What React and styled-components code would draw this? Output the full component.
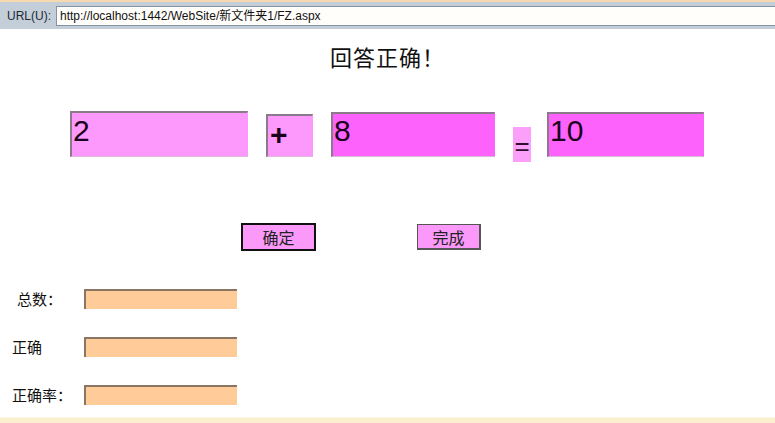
import React from "react";
import styled, { createGlobalStyle } from "styled-components";

const Global = createGlobalStyle`
  html, body { margin: 0; padding: 0; background: #fff; }
  body { font-family: "Noto Sans CJK SC", "Liberation Sans", sans-serif; }
  #root { height: 423px; overflow: hidden; }
`;

const Page = styled.div`
  height: 423px;
  display: flex;
  flex-direction: column;
  background: #fff;
`;

const UrlBar = styled.div`
  height: 27px;
  border-top: 2px solid #f6d9ae;
  background: #c3ced8;
  display: flex;
  align-items: center;
  padding-left: 7px;
  gap: 6px;
`;

const UrlLabel = styled.span`
  font-family: "Liberation Sans", Arial, sans-serif;
  font-size: 12px;
  color: #1e2a36;
  width: 43px;
`;

const UrlField = styled.div`
  flex: 1;
  height: 18px;
  margin-top: 1px;
  background: #fffefb;
  border-top: 1px solid #8594a2;
  border-bottom: 1px solid #8594a2;
  border-left: 1px solid #8594a2;
  font-family: "Liberation Sans", "Noto Sans CJK SC", sans-serif;
  font-size: 12px;
  line-height: 18px;
  padding-left: 3px;
  color: #111;
`;

const Title = styled.div`
  text-align: center;
  font-family: "Noto Sans CJK SC", sans-serif;
  font-size: 22px;
  letter-spacing: 1px;
  line-height: 30px;
  height: 30px;
  color: #111;
  margin-top: 12px;
`;

const Equation = styled.div`
  display: flex;
  align-items: flex-end;
  gap: 18px;
  padding-left: 70px;
  margin-top: 40px;
  height: 46px;
`;

const Box = styled.div`
  box-sizing: border-box;
  width: ${(p) => p.$w}px;
  height: ${(p) => p.$h}px;
  background: ${(p) => p.$bg};
  border-top: 2px solid #8a7a8a;
  border-left: 2px solid #8a7a8a;
  border-right: 1px solid ${(p) => p.$bg};
  border-bottom: 1px solid #d9b8d9;
  font-family: "Liberation Sans", Arial, sans-serif;
  font-size: ${(p) => p.$fs || 30}px;
  font-weight: ${(p) => (p.$bold ? 700 : 400)};
  color: #1a001a;
  display: flex;
  align-items: center;
  padding-left: ${(p) => p.$pl ?? 1}px;
  padding-bottom: ${(p) => p.$pb ?? 8}px;
`;

const Equals = styled.div`
  box-sizing: border-box;
  width: 18px;
  height: 35px;
  margin-bottom: -5px;
  margin-right: -2px;
  background: #fb9ffb;
  font-family: "Liberation Sans", Arial, sans-serif;
  font-size: 26px;
  line-height: 30px;
  text-align: center;
  color: #2a102a;
  padding-top: 4px;
`;

const Buttons = styled.div`
  display: flex;
  align-items: flex-start;
  padding-left: 241px;
  margin-top: 66px;
  gap: 101px;
`;

const Button = styled.div`
  box-sizing: border-box;
  width: ${(p) => p.$w}px;
  height: ${(p) => p.$h}px;
  margin-top: ${(p) => p.$mt || 0}px;
  background: #fa99fa;
  border: ${(p) => (p.$primary ? "2px solid #111" : "1px solid #555")};
  border-right-width: 2px;
  border-bottom-width: 2px;
  font-family: "Noto Sans CJK SC", sans-serif;
  font-size: 16px;
  color: #222;
  display: flex;
  align-items: center;
  justify-content: center;
`;

const Stats = styled.div`
  display: grid;
  grid-template-columns: 72px 153px;
  align-items: center;
  row-gap: 28px;
  padding-left: 12px;
  margin-top: 38px;
`;

const Label = styled.div`
  font-family: "Noto Sans CJK SC", sans-serif;
  font-size: 15px;
  line-height: 20px;
  color: #111;
  padding-left: ${(p) => p.$pl || 0}px;
`;

const Field = styled.div`
  box-sizing: border-box;
  height: 20px;
  background: #ffcb98;
  border-top: 2px solid #8a7565;
  border-left: 2px solid #8a7565;
`;

const Footer = styled.div`
  margin-top: auto;
  height: 5px;
  background: #fcefcf;
  border-top: 1px solid #fdf7e6;
`;

export default function App() {
  return (
    <>
      <Global />
      <Page>
        <UrlBar>
          <UrlLabel>URL(U):</UrlLabel>
          <UrlField>http://localhost:1442/WebSite/新文件夹1/FZ.aspx</UrlField>
        </UrlBar>
        <Title>回答正确！</Title>
        <Equation>
          <Box $w={178} $h={46} $bg="#fd98fd">2</Box>
          <Box $w={47} $h={43} $bg="#fd98fd" $pl={2} $pb={3} $bold>+</Box>
          <Box $w={164} $h={45} $bg="#fd62fd">8</Box>
          <Equals>=</Equals>
          <Box $w={157} $h={45} $bg="#fd62fd">10</Box>
        </Equation>
        <Buttons>
          <Button $primary $w={75} $h={28}>确定</Button>
          <Button $w={64} $h={26} $mt={1}>完成</Button>
        </Buttons>
        <Stats>
          <Label $pl={5}>总数：</Label>
          <Field />
          <Label>正确</Label>
          <Field />
          <Label>正确率：</Label>
          <Field />
        </Stats>
        <Footer />
      </Page>
    </>
  );
}
